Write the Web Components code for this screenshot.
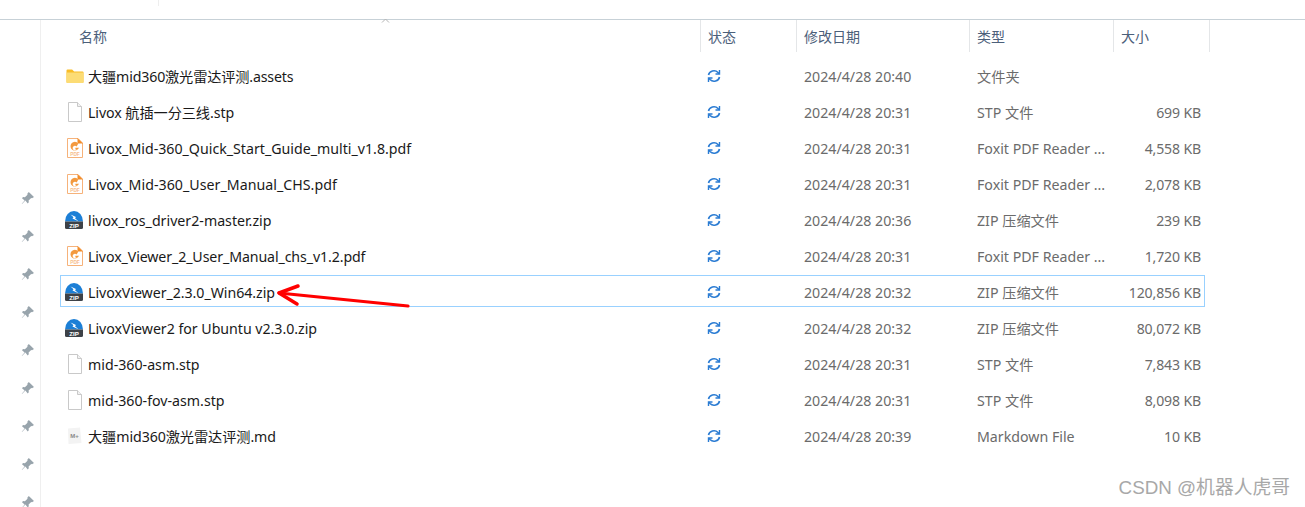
<!DOCTYPE html>
<html lang="zh"><head><meta charset="utf-8"><title>Explorer</title>
<style>
html,body{margin:0;height:507px;overflow:hidden;background:#fff}
body{font-family:"Noto Sans","Noto Sans CJK SC",sans-serif}
</style></head>
<body>
<explorer-window>
  <nav-pane slot="nav"></nav-pane>
  <list-header slot="header"></list-header>
  <file-row kind="folder" ls="-.16" name="大疆mid360激光雷达评测.assets" date="2024/4/28 20:40" type="文件夹" size=""></file-row>
  <file-row kind="file" ls="-.08" name="Livox 航插一分三线.stp" date="2024/4/28 20:31" type="STP 文件" size="699 KB"></file-row>
  <file-row kind="pdf" name="Livox_Mid-360_Quick_Start_Guide_multi_v1.8.pdf" date="2024/4/28 20:31" type="Foxit PDF Reader ..." size="4,558 KB"></file-row>
  <file-row kind="pdf" ls=".03" name="Livox_Mid-360_User_Manual_CHS.pdf" date="2024/4/28 20:31" type="Foxit PDF Reader ..." size="2,078 KB"></file-row>
  <file-row kind="zip" name="livox_ros_driver2-master.zip" date="2024/4/28 20:36" type="ZIP 压缩文件" size="239 KB"></file-row>
  <file-row kind="pdf" ls="-.11" name="Livox_Viewer_2_User_Manual_chs_v1.2.pdf" date="2024/4/28 20:31" type="Foxit PDF Reader ..." size="1,720 KB"></file-row>
  <file-row kind="zip" selected ls="-.05" name="LivoxViewer_2.3.0_Win64.zip" date="2024/4/28 20:32" type="ZIP 压缩文件" size="120,856 KB"><red-arrow></red-arrow></file-row>
  <file-row kind="zip" ls="-.03" name="LivoxViewer2 for Ubuntu v2.3.0.zip" date="2024/4/28 20:32" type="ZIP 压缩文件" size="80,072 KB"></file-row>
  <file-row kind="file" name="mid-360-asm.stp" date="2024/4/28 20:31" type="STP 文件" size="7,843 KB"></file-row>
  <file-row kind="file" name="mid-360-fov-asm.stp" date="2024/4/28 20:31" type="STP 文件" size="8,098 KB"></file-row>
  <file-row kind="md" ls="-.08" name="大疆mid360激光雷达评测.md" date="2024/4/28 20:39" type="Markdown File" size="10 KB"></file-row>
  <water-mark slot="overlay">CSDN @机器人虎哥</water-mark>
</explorer-window>
<script>
const ICONS={
folder:`<svg width="20" height="20" viewBox="0 0 20 20"><path d="M1.500 4.500q0-1 1-1h4.600l2 2h8.400q1 0 1 1v9.500q0 1-1 1h-15q-1 0-1-1z" fill="#f9bd27"/><path d="M1.500 6.500h17v9.500q0 1-1 1h-15q-1 0-1-1z" fill="#fcdc75"/></svg>`,
file:`<svg width="20" height="20" viewBox="0 0 20 20"><path d="M3.500.5h9l4 4v15h-13z" fill="#fff" stroke="#c9c9c9"/><path d="M12.500.5v4h4" fill="#f2f2f2" stroke="#c9c9c9"/></svg>`,
pdf:`<svg width="20" height="20" viewBox="0 0 20 20"><path d="M2.500.5h10.500l4.500 4.500v14.500h-15z" fill="#fff" stroke="#f6b27a"/><path d="M12.500 0v5.500h5.500z" fill="#f28c28"/><path d="M13.300 5.400a4.400 4.400 0 1 0 .7 4.400h-3.600v1.800h1.200q-.6.900-1.800.7a2.300 2.300 0 1 1 1.900-3.800z" fill="#f39a3f"/><text x="10" y="18" font-size="4.800" font-weight="700" fill="#f7bd8c" text-anchor="middle" font-family="Liberation Sans">PDF</text></svg>`,
zip:`<svg width="20" height="20" viewBox="1 0 20 20"><path d="M1 11.500a9 10.500 0 0 1 18 0z" fill="#1c7fd6"/><path d="M6.500 4.500l5.500 2.500-1 1.200 3.500 3-6-2.800 1-1.200z" fill="#fff"/><path d="M1 11.500h18v6q0 1.500-1.500 1.500h-15q-1.500 0-1.500-1.500z" fill="#3d4248"/><text x="10" y="17.600" font-size="6.200" font-weight="700" fill="#fff" text-anchor="middle" font-family="Liberation Sans">ZIP</text></svg>`,
md:`<svg width="20" height="20" viewBox="0 0 20 20"><path d="M3 2.500l12-1 1.500 15.500-13 1z" fill="#f3f3f3"/><text x="9.500" y="12" font-size="6" font-weight="700" fill="#888" text-anchor="middle" font-family="Liberation Sans">M+</text></svg>`};

class ExplorerWindow extends HTMLElement{constructor(){super();this.attachShadow({mode:"open"}).innerHTML=`<style>
:host{display:block;position:relative;height:507px;overflow:hidden;color:#1a1a1a}
.top{height:19px;border-bottom:1px solid #c7d1d7;position:relative}
.top i{position:absolute;left:158px;top:0;width:1px;height:6px;background:#eee}
.caret{position:absolute;left:381px;top:18px;width:9px;height:6px}
.body{display:grid;grid-template-columns:40px 1fr;height:487px}
.main{border-left:1px solid #efefef;display:flex;flex-direction:column;min-width:0}
.rows{padding:7px 0 0 19px;display:flex;flex-direction:column;gap:4px}
</style>
<div class="top"><i></i></div>
<svg class="caret" viewBox="0 0 9 6"><path d="M1 4.500l3.500-3.500 3.500 3.500" fill="none" stroke="#b5b5b5"/></svg>
<div class="body"><slot name="nav"></slot><div class="main"><slot name="header"></slot><div class="rows"><slot></slot></div></div></div>
<slot name="overlay"></slot>`}}

class NavPane extends HTMLElement{constructor(){super();const pin=`<svg width="14" height="14" viewBox="0 0 14 14"><path d="M7.800 1l5.200 5-2 1.200-.8-.3-2.600 2.600.2 1.800-1.100 1.100-2.300-2.800L1 13l-.2-.2 2.800-3.300-2.600-2.300 1-1.100 1.900.1 2.600-2.500-.2-1z" fill="#98a4ac"/></svg>`;
this.attachShadow({mode:"open"}).innerHTML=`<style>
:host{display:flex;flex-direction:column;height:487px;overflow:hidden}
.rule{height:1px;width:28px;background:#dcdcdc;margin-top:140px}
.pins{display:flex;flex-direction:column;align-items:flex-start;gap:24px;padding:31px 0 0 21px}
svg{display:block;flex:none}
</style><div class="rule"></div><div class="pins">${pin.repeat(9)}</div>`}}

class ListHeader extends HTMLElement{constructor(){super();this.attachShadow({mode:"open"}).innerHTML=`<style>
:host{display:grid;grid-template-columns:660px 96px 173px 144px 96px;height:32px;font-size:14px;color:#4c607a;font-family:"Noto Sans CJK SC","Noto Sans",sans-serif}
div{padding-left:7px;border-right:1px solid #e4e6e8;line-height:32px;white-space:nowrap}
div:first-of-type{padding-left:38px}
</style><div>名称</div><div>状态</div><div>修改日期</div><div>类型</div><div>大小</div>`}}

class FileRow extends HTMLElement{constructor(){super();const g=n=>this.getAttribute(n)||"";this.attachShadow({mode:"open"}).innerHTML=`<style>
:host{display:grid;grid-template-columns:640px 96.500px 172.500px 144px 87px;height:32px;box-sizing:border-box;border:1px solid transparent;padding-top:2px;align-items:center;font-size:14.200px;line-height:20px;position:relative;width:1145px;white-space:nowrap}
:host([selected]){border-color:#99d1ff}
.name{display:flex;align-items:center;gap:3px;padding-left:4px}
.label{padding-top:2px}
.ico{width:20px;height:20px;flex:none}
.ico svg{display:block}
.sync{padding-left:5px;display:flex;align-items:center}
.muted{color:#6b6b6b;padding-left:7px;padding-top:2px}
.size{color:#6b6b6b;text-align:right;letter-spacing:-.15px;font-size:14.100px;padding-top:2px}
.date{padding-left:6.500px}
</style>
<div class="name"><span class="ico">${ICONS[g("kind")]}</span><span class="label" style="letter-spacing:${g("ls")||0}px">${g("name")}</span></div>
<div class="sync"><svg width="16" height="16" viewBox="0 0 16 16" fill="none" stroke="#2b7cd3" stroke-width="1.600"><path d="M2.500 7a5.500 5 0 0 1 9.500-2.500l1 1.200"/><path d="M13.500 2v4h-4" stroke-width="1.400"/><path d="M13.500 9a5.500 5 0 0 1-9.500 2.500l-1-1.200"/><path d="M2.500 14v-4h4" stroke-width="1.400"/></svg></div>
<div class="muted date">${g("date")}</div><div class="muted">${g("type")}</div><div class="size">${g("size")}</div><slot></slot>`}}

class RedArrow extends HTMLElement{constructor(){super();this.attachShadow({mode:"open"}).innerHTML=`<style>
:host{position:absolute;left:215px;top:2px;width:136px;height:30px}svg{display:block}
</style><svg width="136" height="30" viewBox="0 0 136 30" fill="none" stroke="#ff0000" stroke-linecap="round" stroke-linejoin="round"><path d="M3 15L132 28" stroke-width="3.200"/><path d="M22 8L3 15l18 11" stroke-width="3.500"/></svg>`}}

class WaterMark extends HTMLElement{constructor(){super();this.attachShadow({mode:"open"}).innerHTML=`<style>
:host{position:absolute;right:15px;top:476px;font:18.800px/24px "Liberation Sans","Noto Sans CJK SC",sans-serif;color:#a8a8a8;white-space:nowrap}
</style><slot></slot>`}}
for(const [n,c] of Object.entries({"explorer-window":ExplorerWindow,"nav-pane":NavPane,"list-header":ListHeader,"file-row":FileRow,"red-arrow":RedArrow,"water-mark":WaterMark}))customElements.define(n,c);
</script>
</body></html>
